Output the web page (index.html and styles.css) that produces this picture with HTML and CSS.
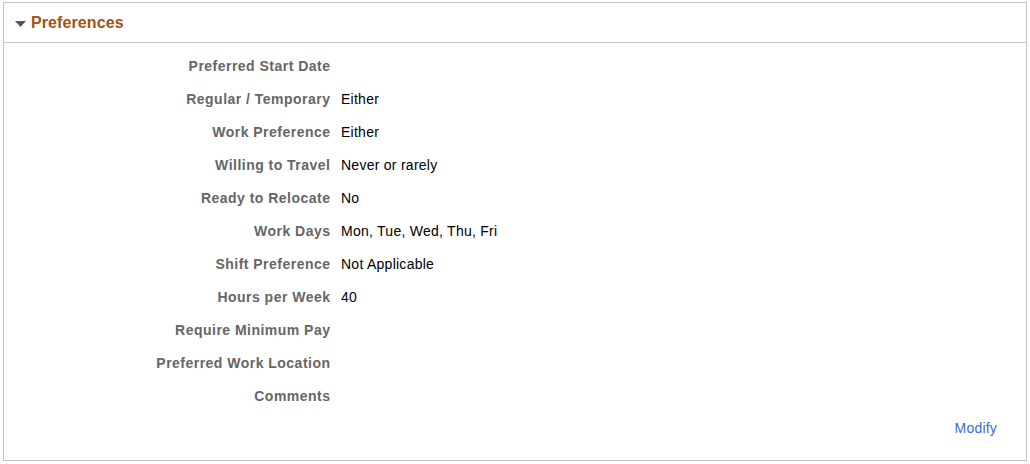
FILE: index.html
```html
<!DOCTYPE html>
<html>
<head>
<meta charset="utf-8">
<link rel="stylesheet" href="styles.css">
</head>
<body>
<section class="panel">
  <header class="panel-head">
    <svg class="caret" width="11" height="6" viewBox="0 0 11 6"><path d="M0 0H11L5.5 6Z" fill="#555"/></svg>
    <h2 class="panel-title">Preferences</h2>
  </header>
  <div class="panel-body">
    <dl class="fields">
      <dt>Preferred Start Date</dt><dd></dd>
      <dt>Regular / Temporary</dt><dd>Either</dd>
      <dt>Work Preference</dt><dd>Either</dd>
      <dt>Willing to Travel</dt><dd>Never or rarely</dd>
      <dt>Ready to Relocate</dt><dd>No</dd>
      <dt>Work Days</dt><dd>Mon, Tue, Wed, Thu, Fri</dd>
      <dt>Shift Preference</dt><dd>Not Applicable</dd>
      <dt>Hours per Week</dt><dd>40</dd>
      <dt>Require Minimum Pay</dt><dd></dd>
      <dt>Preferred Work Location</dt><dd></dd>
      <dt>Comments</dt><dd></dd>
    </dl>
    <div class="actions"><a class="modify" href="#">Modify</a></div>
  </div>
</section>
</body>
</html>
```
FILE: styles.css
```css
html, body {
  margin: 0;
  padding: 0;
  background: #fff;
}
body {
  font-family: "Liberation Sans", Arial, sans-serif;
  padding: 2px 3px 0 3px;
}
.panel {
  width: 1024px;
  height: 459px;
  box-sizing: border-box;
  border: 1px solid #c4c4c4;
}
.panel-head {
  height: 40px;
  box-sizing: border-box;
  border-bottom: 1px solid #c8c8c8;
  display: flex;
  align-items: center;
  padding-left: 11px;
  padding-top: 1px;
}
.caret {
  margin-right: 5px;
  margin-top: 1px;
}
.panel-title {
  margin: 0;
  font-size: 16px;
  font-weight: bold;
  color: #a5510f;
  letter-spacing: 0.1px;
}
.panel-body {
  padding-top: 7px;
}
.fields {
  margin: 0;
  display: grid;
  grid-template-columns: 326px 1fr;
  column-gap: 11px;
  grid-auto-rows: 33px;
  font-size: 14px;
  line-height: 33px;
}
.fields dt {
  text-align: right;
  font-weight: bold;
  color: #666;
  letter-spacing: 0.48px;
  margin-right: -0.48px;
}
.fields dd {
  margin: 0;
  color: #000;
  letter-spacing: 0.26px;
}
.actions {
  display: flex;
  justify-content: flex-end;
  padding-right: 29px;
  line-height: 30px;
}
.modify {
  font-size: 14px;
  color: #3a6bd6;
  text-decoration: none;
  letter-spacing: 0.2px;
}
```
